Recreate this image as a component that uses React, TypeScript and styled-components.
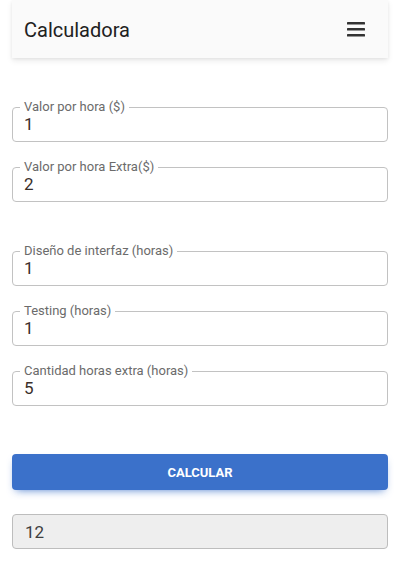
import React from "react";
import styled, { createGlobalStyle } from "styled-components";

const Global = createGlobalStyle`
  html, body { margin: 0; padding: 0; background: #ffffff; }
  body { font-family: Roboto, "Noto Sans", Arial, sans-serif; }
  * { box-sizing: border-box; }
`;

const Page = styled.div`
  width: 400px;
  padding: 0 12px 24px;
  display: flex;
  flex-direction: column;
`;

const Header = styled.header`
  height: 58px;
  background: #fafafa;
  display: flex;
  align-items: center;
  justify-content: space-between;
  padding: 0 22px 0 12px;
  box-shadow: 0 3px 6px rgba(0, 0, 0, 0.08), 0 1px 3px rgba(0, 0, 0, 0.06);
`;

const Title = styled.h1`
  margin: 0;
  font-size: 20px;
  font-weight: 400;
  color: #212121;
  padding-top: 2px;
`;

const MenuButton = styled.button`
  border: none;
  background: transparent;
  padding: 0;
  width: 20px;
  height: 18px;
  display: flex;
  align-items: center;
  justify-content: center;
  cursor: pointer;
`;

const Form = styled.form`
  display: flex;
  flex-direction: column;
  padding-top: 42px;
`;

const Group = styled.div<{ $gap: number }>`
  display: flex;
  flex-direction: column;
  gap: 18px;
  margin-bottom: ${(p) => p.$gap}px;
`;

const Field = styled.fieldset`
  margin: 0;
  padding: 0 12px 7px 7px;
  border: 1px solid #c2c2c2;
  border-radius: 4px;
  min-width: 0;
`;

const Legend = styled.legend`
  padding: 0 4px;
  font-size: 13px;
  line-height: 14px;
  color: #6b6b6b;
`;

const Input = styled.input`
  display: block;
  width: 100%;
  border: none;
  outline: none;
  background: transparent;
  padding: 0 0 0 4px;
  height: 20px;
  font-family: Roboto, Arial, sans-serif;
  font-size: 17px;
  line-height: 20px;
  color: #3a2f2a;
`;

const SubmitButton = styled.button`
  height: 36px;
  border: none;
  border-radius: 4px;
  background: #3b71ca;
  color: #ffffff;
  font-family: Roboto, Arial, sans-serif;
  font-size: 13px;
  font-weight: 700;
  letter-spacing: 0;
  text-transform: uppercase;
  box-shadow: 0 4px 9px -4px rgba(59, 113, 202, 0.9);
  cursor: pointer;
  margin-bottom: 24px;
`;

const Result = styled.input`
  height: 35px;
  border: 1px solid #bdbdbd;
  border-radius: 4px;
  background: #eeeeee;
  padding: 0 12px;
  font-family: Roboto, Arial, sans-serif;
  font-size: 17px;
  color: #3e3e3e;
  outline: none;
`;

const fields1 = [
  { label: "Valor por hora ($)", value: "1" },
  { label: "Valor por hora Extra($)", value: "2" },
];
const fields2 = [
  { label: "Diseño de interfaz (horas)", value: "1" },
  { label: "Testing (horas)", value: "1" },
  { label: "Cantidad horas extra (horas)", value: "5" },
];

const MenuIcon = () => (
  <svg width="18" height="15" viewBox="0 0 18 15">
    <rect x="0" y="0" width="18" height="2.6" rx="0.6" fill="#333" />
    <rect x="0" y="6" width="18" height="2.6" rx="0.6" fill="#333" />
    <rect x="0" y="12" width="18" height="2.6" rx="0.6" fill="#333" />
  </svg>
);

export default function App() {
  return (
    <>
      <Global />
      <Page>
        <Header>
          <Title>Calculadora</Title>
          <MenuButton aria-label="menu">
            <MenuIcon />
          </MenuButton>
        </Header>
        <Form onSubmit={(e) => e.preventDefault()}>
          <Group $gap={42}>
            {fields1.map((f) => (
              <Field key={f.label}>
                <Legend>{f.label}</Legend>
                <Input defaultValue={f.value} />
              </Field>
            ))}
          </Group>
          <Group $gap={48}>
            {fields2.map((f) => (
              <Field key={f.label}>
                <Legend>{f.label}</Legend>
                <Input defaultValue={f.value} />
              </Field>
            ))}
          </Group>
          <SubmitButton type="submit">Calcular</SubmitButton>
          <Result readOnly value="12" />
        </Form>
      </Page>
    </>
  );
}
